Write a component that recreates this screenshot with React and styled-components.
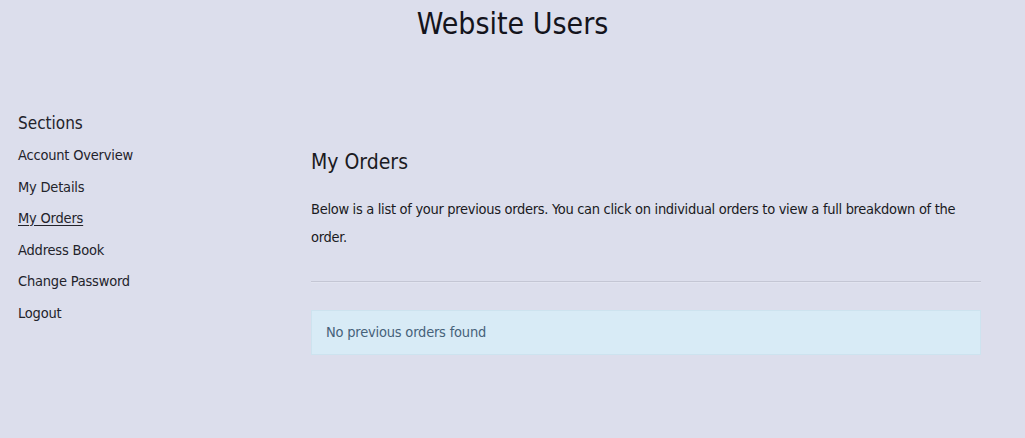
import React from "react";
import styled, { createGlobalStyle } from "styled-components";

const GlobalStyle = createGlobalStyle`
  html, body {
    margin: 0;
    padding: 0;
    background: #dcdeec;
  }
  body {
    font-family: "Liberation Sans Narrow", "DejaVu Sans Condensed", "Roboto", sans-serif;
    color: #1a1a22;
  }
`;

const Page = styled.div`
  min-height: 438px;
  background: #dcdeec;
`;

const Title = styled.h1`
  margin: 0;
  padding-top: 5px;
  text-align: center;
  font-size: 30px;
  font-weight: 400;
  line-height: 38px;
  color: #14141c;
`;

const Layout = styled.div`
  display: grid;
  grid-template-columns: 293px 670px;
  padding: 67px 0 0 18px;
`;

const Sidebar = styled.nav`
  display: flex;
  flex-direction: column;
`;

const SectionsHeading = styled.h3`
  margin: 0 0 4px;
  font-size: 17px;
  font-weight: 400;
  line-height: 26px;
  color: #23232b;
`;

const NavLink = styled.a`
  display: block;
  font-size: 14.5px;
  line-height: 31.6px;
  letter-spacing: -0.2px;
  color: #23232b;
  text-decoration: ${(p) => (p.$active ? "underline" : "none")};
  text-underline-offset: 2px;
  cursor: pointer;
`;

const Content = styled.section`
  padding-top: 37px;
`;

const Heading = styled.h2`
  margin: 0 0 18px;
  font-size: 21px;
  font-weight: 400;
  line-height: 30px;
  color: #1a1a22;
`;

const Text = styled.p`
  margin: 0;
  font-size: 14.5px;
  line-height: 28px;
  letter-spacing: -0.3px;
  color: #1a1a22;
`;

const Divider = styled.hr`
  margin: 30px 0 27px;
  border: 0;
  border-top: 1px solid #c4c6d4;
  border-bottom: 1px solid #e2e4f0;
`;

const Alert = styled.div`
  padding: 11px 14px 12px;
  font-size: 14.5px;
  line-height: 20px;
  letter-spacing: -0.2px;
  color: #46627a;
  background: #d8ebf6;
  border: 1px solid #cde3ef;
`;

const links = [
  "Account Overview",
  "My Details",
  "My Orders",
  "Address Book",
  "Change Password",
  "Logout",
];

export default function App() {
  return (
    <Page>
      <GlobalStyle />
      <Title>Website Users</Title>
      <Layout>
        <Sidebar>
          <SectionsHeading>Sections</SectionsHeading>
          {links.map((l) => (
            <NavLink key={l} $active={l === "My Orders"}>
              {l}
            </NavLink>
          ))}
        </Sidebar>
        <Content>
          <Heading>My Orders</Heading>
          <Text>
            Below is a list of your previous orders. You can click on individual
            orders to view a full breakdown of the order.
          </Text>
          <Divider />
          <Alert>No previous orders found</Alert>
        </Content>
      </Layout>
    </Page>
  );
}
